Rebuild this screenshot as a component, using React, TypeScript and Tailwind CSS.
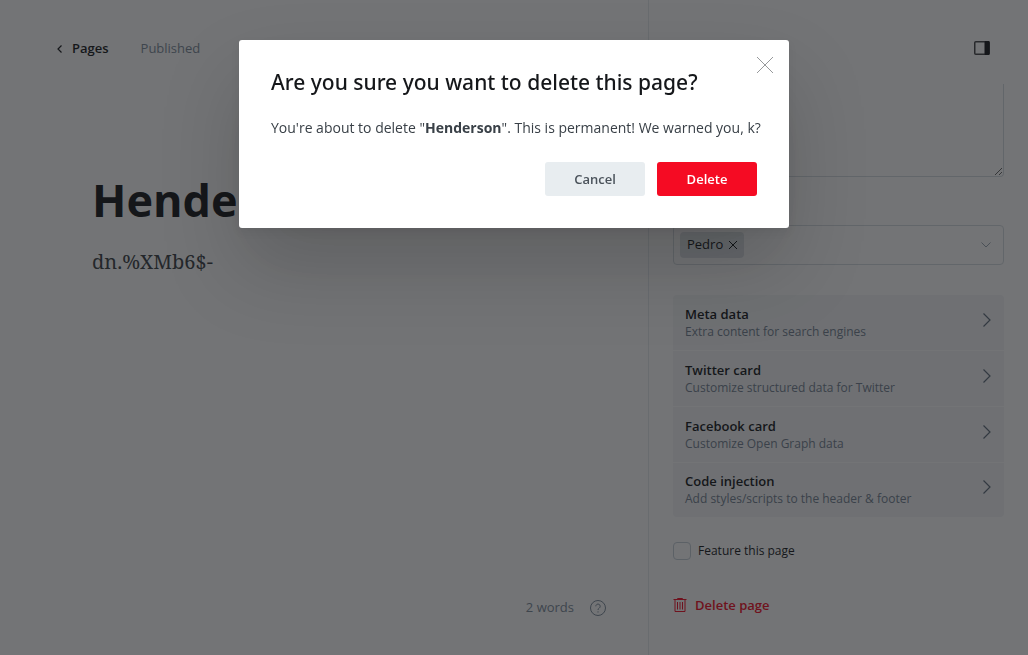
import type { ReactNode } from "react";

const menuItems = [
  { title: "Meta data", detail: "Extra content for search engines" },
  { title: "Twitter card", detail: "Customize structured data for Twitter" },
  { title: "Facebook card", detail: "Customize Open Graph data" },
  { title: "Code injection", detail: "Add styles/scripts to the header & footer" },
];

function Icon({ className, box, children }: { className: string; box: string; children: ReactNode }) {
  return (
    <svg className={className} viewBox={box} fill="none" stroke="currentColor" aria-hidden="true">
      {children}
    </svg>
  );
}

function Editor() {
  return (
    <main className="flex min-w-0 flex-1 flex-col">
      <header className="flex h-[98px] items-center gap-8 pl-14 text-[13px]">
        <a href="#pages" className="flex items-center gap-2 font-semibold text-[#15171a]">
          <Icon className="h-2 w-2" box="0 0 8 8">
            <path d="M5.500 0.500 2 4l3.500 3.500" strokeWidth="1.200" />
          </Icon>
          Pages
        </a>
        <span className="text-[#7c8b9a]">Published</span>
      </header>
      <article className="flex-1 px-[92px] pt-[70px]">
        <h1 className="text-[45px] leading-[64px] font-bold text-[#15171a]">Henderson</h1>
        <p className="mt-4 font-['Noto_Serif','Liberation_Serif',serif] text-xl leading-7 text-[#3a3f45]">
          dn.%XMb6$-
        </p>
      </article>
      <footer className="flex h-[94px] items-center justify-end gap-4 pr-[42px] text-[13px] text-[#7c8b9a]">
        <span>2 words</span>
        <button type="button" aria-label="Help">
          <Icon className="h-4 w-4" box="0 0 16 16">
            <circle cx="8" cy="8" r="7.500" />
            <path d="M5.800 6.300a2.200 2.200 0 1 1 3.400 1.800C8.400 8.600 8 9 8 10M8 11.300v1.200" />
          </Icon>
        </button>
      </footer>
    </main>
  );
}

function Settings() {
  return (
    <aside className="flex w-[380px] shrink-0 flex-col border-l border-[#e5eaee]">
      <header className="flex h-[84px] shrink-0 justify-end pt-[41px] pr-[38px]">
        <button type="button" aria-label="Toggle settings" className="h-[14px]">
          <Icon className="h-[14px] w-4 text-[#15171a]" box="0 0 16 14">
            <rect x="0.750" y="0.750" width="14.500" height="12.500" rx="1" strokeWidth="1.500" opacity="0.800" />
            <path d="M11 0.500h4v13h-4z" fill="currentColor" />
          </Icon>
        </button>
      </header>
      <div className="flex flex-col px-6">
        <textarea
          aria-label="Excerpt"
          className="block h-[93px] w-full resize rounded-b border border-t-0 border-[#d5dce1]"
        />
        <div className="mt-12 flex h-10 items-center justify-between rounded border border-[#d5dce1] pr-3 pl-1.5">
          <span className="flex h-[26px] items-center gap-1.5 rounded-sm bg-[#dfe4e8] px-[7px] text-[13px] text-[#15171a]">
            Pedro
            <button type="button" aria-label="Remove Pedro">
              <Icon className="h-2 w-2" box="0 0 8 8">
                <path d="m0 0 8 8M8 0 0 8" />
              </Icon>
            </button>
          </span>
          <button type="button" aria-label="Show authors" className="text-[#9aa6b1]">
            <Icon className="h-[6px] w-[10px]" box="0 0 10 6">
              <path d="m0.500 0.500 4.500 4.500 4.500-4.500" />
            </Icon>
          </button>
        </div>
        <nav className="mt-[30px] flex flex-col overflow-hidden rounded bg-[#f4f6f8]">
          {menuItems.map((item) => (
            <button
              key={item.title}
              type="button"
              className="flex h-14 items-center justify-between border-b border-white pr-3 pl-3 text-left last:h-[54px] last:border-b-0"
            >
              <span>
                <span className="block text-[13px] leading-[18px] font-semibold text-[#15171a]">{item.title}</span>
                <span className="block text-xs leading-[18px] text-[#738191]">{item.detail}</span>
              </span>
              <Icon className="mb-1.5 h-[14px] w-[10px] text-[#5f6d7b]" box="0 0 10 14">
                <path d="m1.500 0.500 6.500 6.500-6.500 6.500" strokeWidth="1.200" />
              </Icon>
            </button>
          ))}
        </nav>
        <label className="mt-6 flex items-center gap-[7px] text-xs leading-5 text-[#15171a]">
          <input type="checkbox" className="h-[18px] w-[18px] appearance-none rounded border border-[#c5d0d8]" />
          Feature this page
        </label>
        <button
          type="button"
          className="mt-8 flex items-center gap-2 self-start text-[13px] leading-6 font-semibold text-[#f50b23]"
        >
          <Icon className="h-[14px] w-[14px]" box="0 0 14 14">
            <path d="M0.500 1.500h13M4.500 1.500V0.500h5v1M2 2v11.500h10V2M4.500 4v7.500M7 4v7.500M9.500 4v7.500" />
          </Icon>
          Delete page
        </button>
      </div>
    </aside>
  );
}

function DeleteDialog() {
  return (
    <div className="fixed inset-0 flex items-start justify-center bg-[#15171a]/60 pt-10">
      <section
        role="dialog"
        aria-modal="true"
        aria-labelledby="dialog-title"
        className="relative w-full max-w-[550px] rounded-[3px] bg-white pt-6 pr-4 pb-8 pl-8 shadow-[0_4px_10px_rgba(0,0,0,0.06),0_40px_80px_rgba(0,0,0,0.18)]"
      >
        <h2
          id="dialog-title"
          className="font-['Noto_Sans','Open_Sans',sans-serif] text-[21px] leading-9 font-medium text-[#15171a]"
        >
          Are you sure you want to delete this page?
        </h2>
        <p className="mt-4 text-sm leading-6 text-[#394047]">
          You're about to delete "<strong className="font-bold">Henderson</strong>". This is permanent! We warned you,
          k?
        </p>
        <div className="mt-[22px] flex justify-end gap-3 pr-4 text-[13px] font-semibold">
          <button type="button" className="h-[34px] w-[100px] rounded-[3px] bg-[#e8edf0] pt-0.5 text-[#4b535b]">
            Cancel
          </button>
          <button type="button" className="h-[34px] w-[100px] rounded-[3px] bg-[#f50b23] pt-0.5 text-white">
            Delete
          </button>
        </div>
        <button type="button" aria-label="Close" className="absolute top-[17px] right-4 text-[#8b8d90]">
          <Icon className="h-4 w-4" box="0 0 16 16">
            <path d="m0 0 16 16M16 0 0 16" strokeWidth="0.900" />
          </Icon>
        </button>
      </section>
    </div>
  );
}

export default function App() {
  return (
    <div className="flex min-h-screen bg-white font-['Open_Sans','Noto_Sans',sans-serif]">
      <Editor />
      <Settings />
      <DeleteDialog />
    </div>
  );
}
